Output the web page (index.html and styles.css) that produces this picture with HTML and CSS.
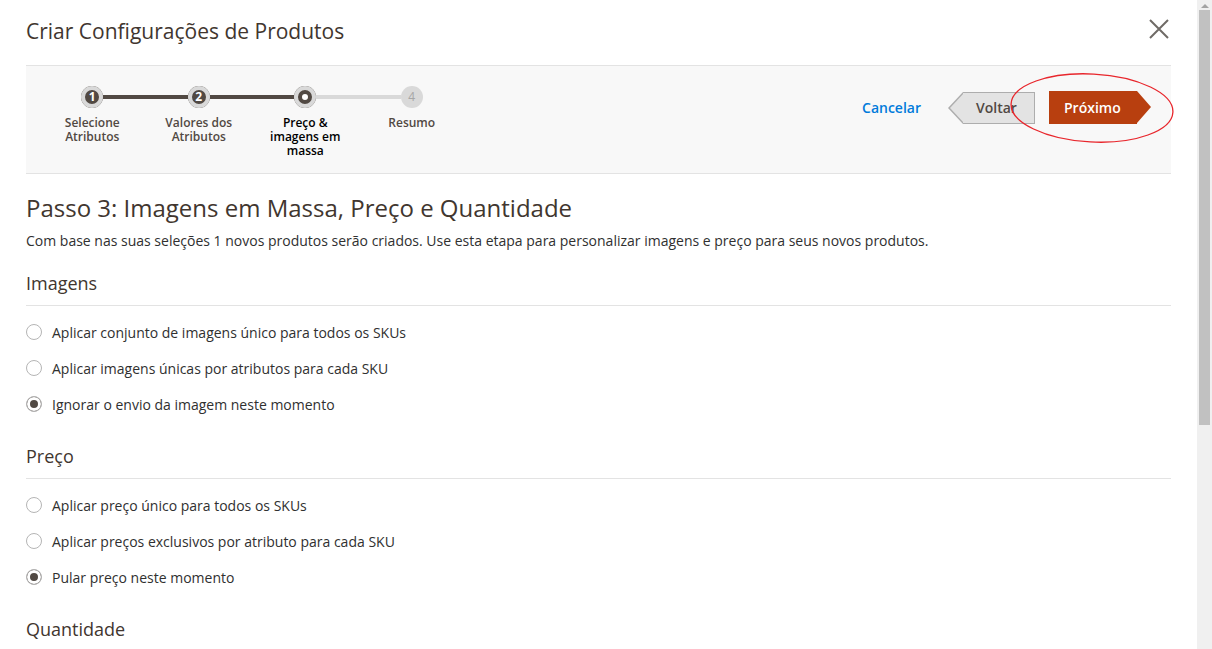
FILE: index.html
```html
<!DOCTYPE html>
<html lang="pt-BR">
<head>
<meta charset="utf-8">
<title>Criar Configurações de Produtos</title>
<link rel="stylesheet" href="styles.css">
</head>
<body>
<div class="page">
  <div class="modal">
    <header class="modal-header">
      <h1 class="modal-title">Criar Configurações de Produtos</h1>
      <button class="close" aria-label="Fechar">
        <svg width="22" height="22" viewBox="0 0 22 22"><path d="M2 2 L20 20 M20 2 L2 20" stroke="#6f6a66" stroke-width="2" fill="none"/></svg>
      </button>
    </header>

    <div class="wizard-bar">
      <ol class="steps">
        <li class="step done">
          <div class="track"><span class="seg seg-hidden"></span><span class="dot">1</span><span class="seg seg-dark"></span></div>
          <span class="label">Selecione Atributos</span>
        </li>
        <li class="step done">
          <div class="track"><span class="seg seg-dark"></span><span class="dot">2</span><span class="seg seg-dark"></span></div>
          <span class="label">Valores dos Atributos</span>
        </li>
        <li class="step active">
          <div class="track"><span class="seg seg-dark"></span><span class="dot"></span><span class="seg seg-light"></span></div>
          <span class="label">Preço &amp; imagens em massa</span>
        </li>
        <li class="step todo">
          <div class="track"><span class="seg seg-light"></span><span class="dot">4</span><span class="seg seg-hidden"></span></div>
          <span class="label">Resumo</span>
        </li>
      </ol>
      <div class="actions">
        <a class="cancel" href="#">Cancelar</a>
        <button class="btn-back">Voltar</button>
        <button class="btn-next">Próximo</button>
        <svg class="annotation" width="170" height="76" viewBox="0 0 170 76"><ellipse cx="84" cy="37" rx="81" ry="34" transform="rotate(3 84 37)" fill="none" stroke="#e8262c" stroke-width="1.3"/></svg>
      </div>
    </div>

    <section class="content">
      <h2 class="step-title">Passo 3: Imagens em Massa, Preço e Quantidade</h2>
      <p class="step-desc">Com base nas suas seleções 1 novos produtos serão criados. Use esta etapa para personalizar imagens e preço para seus novos produtos.</p>

      <h3 class="section-title">Imagens</h3>
      <ul class="options">
        <li><span class="radio"></span>Aplicar conjunto de imagens único para todos os SKUs</li>
        <li><span class="radio"></span>Aplicar imagens únicas por atributos para cada SKU</li>
        <li><span class="radio checked"></span>Ignorar o envio da imagem neste momento</li>
      </ul>

      <h3 class="section-title">Preço</h3>
      <ul class="options">
        <li><span class="radio"></span>Aplicar preço único para todos os SKUs</li>
        <li><span class="radio"></span>Aplicar preços exclusivos por atributo para cada SKU</li>
        <li><span class="radio checked"></span>Pular preço neste momento</li>
      </ul>

      <h3 class="section-title">Quantidade</h3>
    </section>
  </div>

  <div class="scrollbar">
    <div class="sb-arrow"></div>
    <div class="sb-thumb"></div>
    <div class="sb-rest"></div>
  </div>
</div>
</body>
</html>
```

FILE: styles.css
```css
* { box-sizing: border-box; }
html, body { margin: 0; padding: 0; }
body {
  font-family: "Open Sans", "Noto Sans", sans-serif;
  color: #41362f;
  background: #fff;
}
.page {
  display: flex;
  height: 649px;
  overflow: hidden;
}
.modal {
  flex: 1;
  padding: 0 26px;
  overflow: hidden;
}
.modal-header {
  display: flex;
  align-items: center;
  justify-content: space-between;
  height: 65px;
}
.modal-title {
  margin: -3px 0 0;
  font-weight: 400;
  font-size: 21px;
  color: #41362f;
}
.close {
  border: 0;
  background: none;
  padding: 0;
  margin-right: 1px;
  margin-top: -8px;
  display: flex;
}

.wizard-bar {
  display: flex;
  justify-content: space-between;
  align-items: flex-start;
  height: 109px;
  background: #f8f8f8;
  border-top: 1px solid #e3e3e3;
  border-bottom: 1px solid #e3e3e3;
}
.steps {
  list-style: none;
  margin: 0;
  padding: 20px 0 0 13px;
  display: flex;
}
.step {
  width: 106.5px;
  display: flex;
  flex-direction: column;
  align-items: center;
}
.track {
  display: flex;
  align-items: center;
  width: 100%;
}
.seg {
  flex: 1;
  height: 4px;
}
.seg-dark { background: #514943; }
.seg-light { background: #d9d9d9; }
.seg-hidden { background: transparent; }
.dot {
  width: 22px;
  height: 22px;
  border-radius: 50%;
  flex: none;
  display: flex;
  align-items: center;
  justify-content: center;
  font-size: 12px;
  font-weight: 700;
  line-height: 1;
}
.done .dot {
  background: #514943;
  color: #fff;
  box-shadow: inset 0 0 0 4px #d9d9d9;
}
.active .dot {
  background: #fff;
  box-shadow: inset 0 0 0 4px #d9d9d9, inset 0 0 0 8px #514943;
}
.todo .dot {
  background: #d9d9d9;
  color: #a6a6a6;
  font-weight: 400;
}
.label {
  margin-top: 8px;
  width: 80px;
  text-align: center;
  font-size: 12px;
  font-weight: 600;
  line-height: 14px;
  color: #514943;
}
.active .label { color: #000; }
.todo .label { color: #514943; }

.actions {
  display: flex;
  align-items: center;
  padding-top: 25px;
  padding-right: 34px;
  position: relative;
}
.cancel {
  color: #007bdb;
  font-size: 14px;
  font-weight: 600;
  text-decoration: none;
  margin-right: 28px;
}
.btn-back {
  position: relative;
  height: 32px;
  width: 72px;
  margin-left: 14px;
  margin-right: 14px;
  padding: 0 0 0 13px;
  text-align: left;
  background: #e3e3e3;
  border: 1px solid #adadad;
  border-left: 0;
  font-family: inherit;
  font-size: 14px;
  font-weight: 600;
  color: #514943;
}
.btn-back::before {
  content: "";
  position: absolute;
  left: -15px;
  top: -1px;
  width: 0;
  height: 0;
  border-top: 16px solid transparent;
  border-bottom: 16px solid transparent;
  border-right: 15px solid #adadad;
}
.btn-back::after {
  content: "";
  position: absolute;
  left: -13px;
  top: 0;
  width: 0;
  height: 0;
  border-top: 15px solid transparent;
  border-bottom: 15px solid transparent;
  border-right: 14px solid #e3e3e3;
}
.btn-next {
  position: relative;
  height: 33px;
  width: 88px;
  padding: 0 0 0 15px;
  text-align: left;
  background: #b83f0f;
  border: 0;
  font-family: inherit;
  font-size: 14px;
  font-weight: 600;
  color: #fff;
}
.btn-next::after {
  content: "";
  position: absolute;
  right: -14px;
  top: 0;
  width: 0;
  height: 0;
  border-top: 16.5px solid transparent;
  border-bottom: 16.5px solid transparent;
  border-left: 14px solid #b83f0f;
}
.annotation {
  position: absolute;
  right: -7px;
  top: 5px;
  pointer-events: none;
}

.content { padding-top: 18px; }
.step-title {
  margin: 0;
  font-size: 24px;
  font-weight: 400;
  color: #41362f;
  line-height: 32px;
}
.step-desc {
  margin: 7px 0 0;
  font-size: 14px;
  line-height: 20px;
  color: #303030;
}
.section-title {
  margin: 20px 0 0;
  padding-bottom: 10px;
  border-bottom: 1px solid #e3e3e3;
  font-size: 18px;
  font-weight: 400;
  line-height: 24px;
  color: #41362f;
}
.options {
  list-style: none;
  margin: 0;
  padding: 8px 0 2px;
}
.options li {
  display: flex;
  align-items: center;
  height: 36px;
  font-size: 14px;
  color: #303030;
}
.radio {
  width: 16px;
  height: 16px;
  border: 1px solid #b5b5b5;
  border-radius: 50%;
  background: #fff;
  margin: 0 10px 0 0;
  flex: none;
}
.radio.checked {
  background: #514943;
  box-shadow: inset 0 0 0 3px #fff;
}

.scrollbar {
  width: 15px;
  background: #f0f0f0;
  display: flex;
  flex-direction: column;
  align-items: center;
}
.sb-arrow {
  margin-top: 4px;
  width: 0;
  height: 0;
  border-left: 4px solid transparent;
  border-right: 4px solid transparent;
  border-bottom: 4px solid #a3a3a3;
}
.sb-thumb {
  margin-top: 2px;
  width: 11px;
  height: 415px;
  background: #c1c1c1;
}
```
